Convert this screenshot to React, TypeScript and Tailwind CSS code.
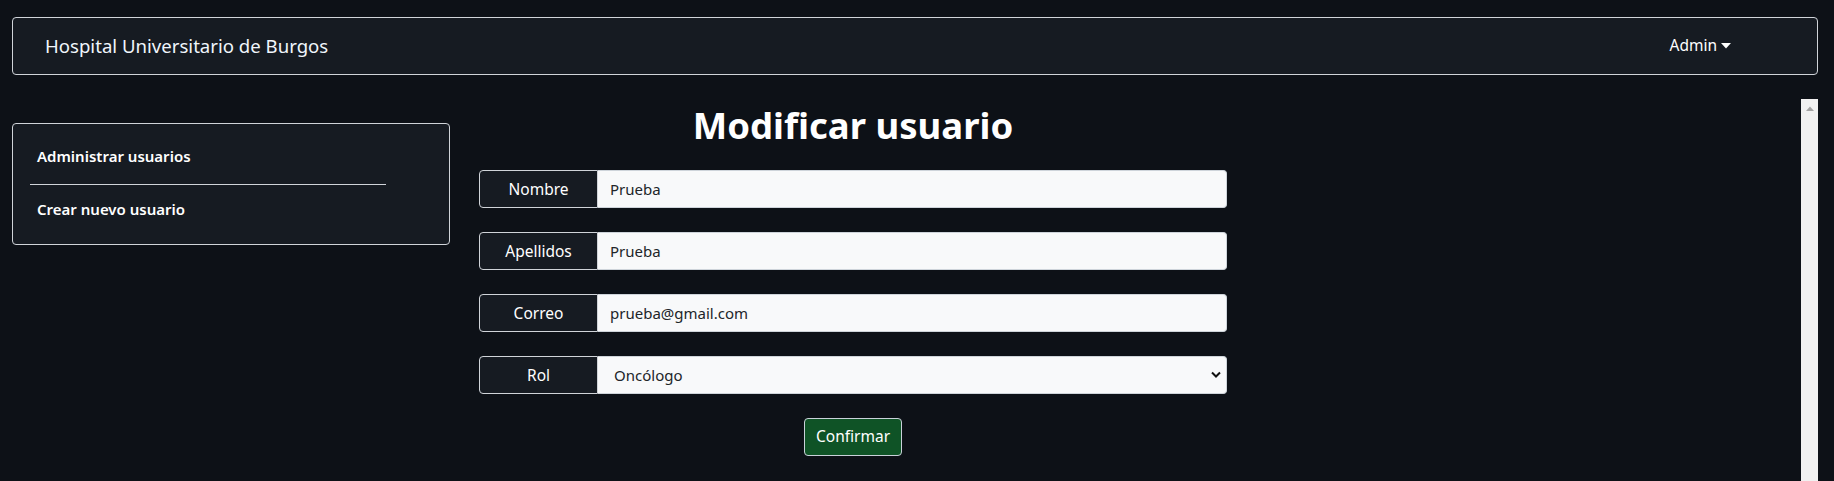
import { useState } from 'react'

const fields = [
  { label: 'Nombre', value: 'Prueba' },
  { label: 'Apellidos', value: 'Prueba' },
  { label: 'Correo', value: 'prueba@gmail.com' },
]

export default function App() {
  const [rol, setRol] = useState('Oncólogo')

  return (
    <div className="min-h-[481px] bg-[#0d1117] text-[#f0f6fc] font-['Noto_Sans','Open_Sans',sans-serif] pt-[17px]">
      {/* Navbar */}
      <nav className="ml-[12px] w-[1806px] h-[58px] flex items-center justify-between rounded-[4px] border border-[#d0d4d9] bg-[#161b22] pl-[32px] pr-[86px]">
        <span className="text-[18.6px] leading-none">Hospital Universitario de Burgos</span>
        <button className="flex items-center gap-[4px] text-[15.5px] text-white">
          Admin
          <svg width="10" height="6" viewBox="0 0 10 6"><path d="M0 0h10L5 5.5z" fill="currentColor" /></svg>
        </button>
      </nav>

      {/* Content + scrollbar */}
      <div className="ml-[12px] mt-[24px] w-[1806px] h-[382px] flex">
        <div className="flex-1 flex items-start">
          <aside className="mt-[24px] w-[438px] rounded-[4px] border border-[#d0d4d9] bg-[#161b22] pt-[20px] pb-[23px]">
            <a className="block pl-[24px] text-[15px] leading-[24px] font-semibold text-white">Administrar usuarios</a>
            <hr className="ml-[17px] w-[356px] mt-[16px] mb-[12px] border-0 border-t border-[#d0d4d9]" />
            <a className="block pl-[24px] text-[15px] leading-[24px] font-semibold text-white">Crear nuevo usuario</a>
          </aside>

          <main className="ml-[29px] w-[748px] flex flex-col items-center">
            <h1 className="text-[36.5px] leading-[48px] font-bold text-white mt-[2px]">Modificar usuario</h1>

            <form className="w-full mt-[21px] flex flex-col gap-[24px]">
              {fields.map(f => (
                <div key={f.label} className="flex h-[38px]">
                  <span className="w-[119px] shrink-0 flex items-center justify-center rounded-l-[4px] border border-[#d0d4d9] bg-[#161b22] text-[15.5px] text-white pt-[1px]">
                    {f.label}
                  </span>
                  <input
                    defaultValue={f.value}
                    className="flex-1 min-w-0 rounded-r-[4px] border border-l-0 border-[#ced4da] bg-[#f8f9fa] px-[12px] text-[15px] text-[#212529] outline-none"
                  />
                </div>
              ))}
              <div className="flex h-[38px]">
                <span className="w-[119px] shrink-0 flex items-center justify-center rounded-l-[4px] border border-[#d0d4d9] bg-[#161b22] text-[15.5px] text-white pt-[1px]">
                  Rol
                </span>
                <div className="relative flex-1">
                  <select
                    value={rol}
                    onChange={e => setRol(e.target.value)}
                    className="appearance-none w-full h-full rounded-r-[4px] border border-l-0 border-[#ced4da] bg-[#f8f9fa] pl-[16px] pr-[32px] text-[15px] text-[#212529] outline-none"
                  >
                    <option>Oncólogo</option>
                    <option>Administrador</option>
                    <option>Enfermero</option>
                  </select>
                  <svg className="absolute right-[6px] top-[15px] pointer-events-none" width="10" height="8" viewBox="0 0 10 8">
                    <path d="M1 1.5l4 4 4-4" fill="none" stroke="#111" strokeWidth="2" />
                  </svg>
                </div>
              </div>

              <div className="flex justify-center">
                <button type="button" className="h-[38px] px-[11px] rounded-[4px] border border-[#c9d1d9] bg-[#0f5326] text-[15.5px] text-white">
                  Confirmar
                </button>
              </div>
            </form>
          </main>
        </div>

        {/* scrollbar track */}
        <div className="w-[17px] shrink-0 bg-[#f1f1f1] flex justify-center pt-[7px]">
          <svg width="8" height="5" viewBox="0 0 8 5"><path d="M0 5L4 0.5L8 5z" fill="#a3a3a3" /></svg>
        </div>
      </div>
    </div>
  )
}
